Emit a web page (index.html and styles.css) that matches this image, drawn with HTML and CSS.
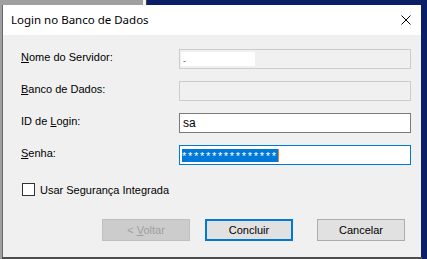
FILE: index.html
```html
<!DOCTYPE html>
<html lang="pt">
<head>
    <meta charset="UTF-8">
    <meta name="viewport" content="width=device-width, initial-scale=1.0">
    <title>Login no Banco de Dados</title>
    <link rel="stylesheet" href="styles.css">
</head>
<body>
    <div class="dialog">
        <div class="title-bar">
            <span class="title">Login no Banco de Dados</span>
            <svg class="close" width="10" height="10" viewBox="0 0 10 10">
                <path d="M0.5 0.5 L9.5 9.5 M9.5 0.5 L0.5 9.5" stroke="#000" stroke-width="1" fill="none"/>
            </svg>
        </div>

        <div class="content">
            <div class="form-grid">
                <label><u>N</u>ome do Servidor:</label>
                <div class="field disabled"><span class="blur">-</span></div>

                <label><u>B</u>anco de Dados:</label>
                <div class="field disabled"></div>

                <label>ID de <u>L</u>ogin:</label>
                <div class="field">sa</div>

                <label><u>S</u>enha:</label>
                <div class="field focused"><span class="selected">****************</span></div>
            </div>

            <div class="check-row">
                <span class="checkbox"></span>
                <span>Usar Segurança Integrada</span>
            </div>

            <div class="buttons">
                <button class="btn" disabled>&lt; <u>V</u>oltar</button>
                <button class="btn default">Concluir</button>
                <button class="btn cancel">Cancelar</button>
            </div>
        </div>
    </div>
</body>
</html>
```

FILE: styles.css
```css
html, body {
    margin: 0;
    height: 100%;
}
body {
    box-sizing: border-box;
    padding: 5px 5px 2px 2px;
    background:
        linear-gradient(#a0a0a0, #a0a0a0) left top / 2px 100% no-repeat,
        linear-gradient(to right, #a0a0a0 143px, #f4f4f4 143px 146px, #404040 146px 147px, #0b1f66 147px) left top / 100% 5px no-repeat,
        linear-gradient(#4c4c4c, #4c4c4c) left bottom / 422px 2px no-repeat,
        #0b1f66;
    font-family: "Liberation Sans", Arial, sans-serif;
    font-size: 11px;
    color: #000;
}
.dialog {
    width: 419px;
    height: 252px;
    box-sizing: border-box;
    border-left: 1px solid #6a6a6a;
    background: #f0f0f0;
    display: flex;
    flex-direction: column;
}
.title-bar {
    height: 30px;
    background: #fff;
    display: flex;
    align-items: center;
    justify-content: space-between;
    padding: 0 10px 0 8px;
}
.title {
    font-family: "Noto Sans", "Open Sans", sans-serif;
    font-size: 11.5px;
    color: #000;
    margin-top: -1px;
}
.close {
    display: block;
}
.content {
    padding: 14px 10px 0 18px;
}
.form-grid {
    display: grid;
    grid-template-columns: 158px 232px;
    grid-auto-rows: 20px;
    row-gap: 12px;
    align-items: center;
}
.form-grid label {
    margin-top: -5px;
}
.field {
    box-sizing: border-box;
    height: 20px;
    border: 1px solid #7a7a7a;
    background: #fff;
    padding: 0 3px;
    display: flex;
    align-items: center;
    font-size: 12px;
}
.field.disabled {
    border-color: #cccccc;
    background: #f0f0f0;
    padding: 0 0 0 1px;
}
.blur {
    background: #fff;
    width: 74px;
    height: 14px;
    line-height: 18px;
    padding-left: 2px;
    font-size: 9px;
    color: #555;
    box-sizing: border-box;
}
.field.focused {
    border-color: #0078d7;
    padding: 0 0 0 2px;
}
.selected {
    background: #0078d7;
    color: #fff;
    height: 13px;
    line-height: 15px;
    width: 96px;
    letter-spacing: 1.7px;
    overflow: hidden;
    border-right: 1px solid #f08020;
    font-size: 11px;
}
.check-row {
    display: flex;
    align-items: center;
    gap: 5px;
    margin: 18px 0 0 1px;
}
.checkbox {
    width: 13px;
    height: 13px;
    box-sizing: border-box;
    border: 1px solid #333;
    background: #fff;
}
.buttons {
    display: flex;
    justify-content: flex-end;
    margin: 23px 6px 0 0;
}
.btn {
    width: 88px;
    height: 22px;
    box-sizing: border-box;
    border: 1px solid #adadad;
    background: #e1e1e1;
    font-family: "Liberation Sans", Arial, sans-serif;
    font-size: 11px;
    color: #000;
    padding: 0;
}
.btn + .btn {
    margin-left: 15px;
}
.btn.cancel {
    margin-left: 24px;
}
.btn.default {
    border: 2px solid #0078d7;
}
.btn:disabled {
    background: #cccccc;
    border-color: #bfbfbf;
    color: #a0a0a0;
}
```
